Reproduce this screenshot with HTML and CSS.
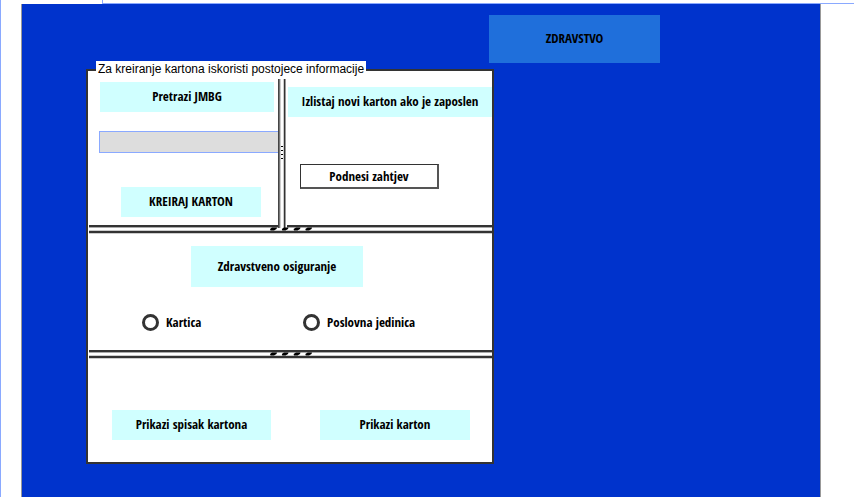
FILE: index.html
```html
<!DOCTYPE html>
<html lang="bs">
<head>
<meta charset="utf-8">
<title>Zdravstvo</title>
<link rel="stylesheet" href="styles.css">
</head>
<body>
<div class="strip"></div>
<main class="canvas">
  <h1 class="title">ZDRAVSTVO</h1>
  <form class="card">
    <fieldset class="panel">
      <legend>Za kreiranje kartona iskoristi postojece informacije</legend>
      <div class="panes">
        <section class="pane-search">
          <label class="tile" for="jmbg">Pretrazi JMBG</label>
          <input class="field" id="jmbg" type="text">
          <button class="tile create" type="button">KREIRAJ KARTON</button>
        </section>
        <div class="split-v">
          <svg width="9" height="16" viewBox="0 0 9 16" aria-hidden="true">
            <path d="M3 0h2v1H3zM3 4h2v1H3zM3 8h2v1H3zM3 12h2v1H3z"/>
          </svg>
        </div>
        <section class="pane-list">
          <button class="tile" type="button">Izlistaj novi karton ako je zaposlen</button>
          <button class="request" type="button">Podnesi zahtjev</button>
        </section>
      </div>
      <div class="split-h">
        <svg width="44" height="5" viewBox="0 0 44 5" aria-hidden="true">
          <path d="M1 3L3 1.500H8L7.500 3L5 4.500H1.500zM12.800 3L15 1.500H19.500L19 3L16.500 4.500H13.300zM24.600 3L27 1.500H31.500L31 3L28.500 4.500H25zM36.300 3L38.700 1.500H43L42.500 3L40 4.500H36.800z"/>
        </svg>
      </div>
      <section class="pane-insurance">
        <h2 class="tile heading">Zdravstveno osiguranje</h2>
        <div class="options">
          <label class="option"><input type="radio" name="vrsta">Kartica</label>
          <label class="option"><input type="radio" name="vrsta">Poslovna jedinica</label>
        </div>
      </section>
      <div class="split-h">
        <svg width="44" height="5" viewBox="0 0 44 5" aria-hidden="true">
          <path d="M1 3L3 1.500H8L7.500 3L5 4.500H1.500zM12.800 3L15 1.500H19.500L19 3L16.500 4.500H13.300zM24.600 3L27 1.500H31.500L31 3L28.500 4.500H25zM36.300 3L38.700 1.500H43L42.500 3L40 4.500H36.800z"/>
        </svg>
      </div>
      <section class="pane-show">
        <button class="tile" type="button">Prikazi spisak kartona</button>
        <button class="tile" type="button">Prikazi karton</button>
      </section>
    </fieldset>
  </form>
</main>
</body>
</html>
```
FILE: styles.css
```css
* {
  box-sizing: border-box;
}

body {
  display: flex;
  flex-direction: column;
  min-height: 100vh;
  margin: 0;
  border-left: 1px solid #8aa9ff;
  background: #fff;
  color: #000;
  font: bold 13px/18px "Open Sans Condensed", "Open Sans", sans-serif;
}

button,
input {
  margin: 0;
  padding: 0;
  border: 0;
  border-radius: 0;
  color: inherit;
  font: inherit;
}

.strip {
  height: 4px;
  margin-left: 101px;
  border-left: 1px solid #8aa9ff;
  border-bottom: 1px solid #8aa9ff;
}

.canvas {
  flex: 1;
  margin: 0 33px 0 20px;
  padding: 11px 64px 33px;
  border: solid #999;
  border-width: 0 1px;
  background: #0033cc;
}

.title {
  display: flex;
  align-items: center;
  justify-content: center;
  width: 171px;
  height: 48px;
  margin: 0 0 0 403px;
  padding-bottom: 2px;
  background: #1f6fdb;
  font: inherit;
}

.card {
  max-width: 408px;
  margin-top: -2px;
}

.panel {
  min-width: 0;
  margin: 0;
  padding: 0;
  border: 2px solid #333;
  background: #fff;
}

.panel legend {
  margin-left: 8px;
  padding: 0 2px 2px;
  background: #fff;
  font: 12px/16px "Liberation Sans", Arial, sans-serif;
}

.tile {
  display: flex;
  align-items: center;
  justify-content: center;
  height: 30px;
  padding-bottom: 2px;
  background: #d0ffff;
}

.panes {
  display: grid;
  grid-template-columns: 190px 9px 1fr;
}

.pane-search {
  display: flex;
  flex-direction: column;
  padding: 3px 0 8px 11px;
}

.pane-search .tile {
  margin: 0 4px 0 1px;
}

.field {
  width: 100%;
  height: 22px;
  margin-top: 19px;
  border: 1px solid #8aa9ff;
  border-right: 0;
  background: #ddd;
}

.pane-search .create {
  margin: 34px 17px 0 22px;
}

.split-v {
  display: flex;
  align-items: center;
  margin-bottom: -3px;
  background: linear-gradient(to right, #444 1px, #777 1px 2px, #ccc 2px 3px, #fff 3px 5px, #ccc 5px 6px, #333 6px 7px, #999 7px 8px, #fff 8px);
}

.pane-list {
  display: flex;
  flex-direction: column;
  align-items: flex-start;
  padding: 8px 0 0 1px;
}

.pane-list .tile {
  width: 100%;
}

.request {
  width: 139px;
  height: 25px;
  margin: 47px 0 0 12px;
  border: 1px solid #333;
  border-right: 2px solid #555;
  border-bottom: 2px solid #555;
  background: #fff;
}

.split-h {
  display: flex;
  justify-content: center;
  height: 10px;
  margin: 0 0 0 1px;
  padding-top: 1px;
  background: linear-gradient(#333 2px, #aaa 2px 3px, transparent 3px 5px, #ccc 5px 6px, #333 6px 8px, #ccc 8px 9px, transparent 9px);
}

.pane-insurance {
  padding: 11px 0 19px;
}

.heading {
  width: 172px;
  height: 41px;
  margin: 0 0 0 103px;
  font: inherit;
}

.options {
  display: grid;
  grid-template-columns: 161px 1fr;
  margin: 26px 0 0 54px;
}

.option {
  display: flex;
  align-items: center;
  gap: 7px;
}

.option input {
  width: 17px;
  height: 17px;
  border: 3px solid #333;
  border-radius: 50%;
  background: #fff;
  appearance: none;
}

.option input:checked {
  background: #333;
}

.pane-show {
  display: grid;
  grid-template-columns: 159px 150px;
  gap: 49px;
  padding: 50px 22px 22px 24px;
}
```
